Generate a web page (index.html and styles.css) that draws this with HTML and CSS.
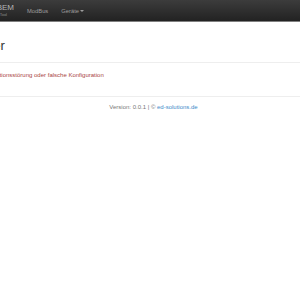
FILE: index.html
```html
<!DOCTYPE html>
<html lang="de">
<head>
<meta charset="utf-8">
<title>Fehler</title>
<link rel="stylesheet" href="styles.css">
</head>
<body>
<nav class="navbar">
  <div class="brand">
    <span class="brand-name">KOMBEM</span>
    <span class="brand-sub">Tool</span>
  </div>
  <ul class="nav">
    <li class="nav-item">ModBus</li>
    <li class="nav-item">Geräte <span class="caret"></span></li>
  </ul>
</nav>
<main class="container">
  <div class="page-header">
    <h2 class="title">Fehler</h2>
  </div>
  <p class="text-danger">Kommunikationsstörung oder falsche Konfiguration</p>
  <footer class="footer">Version: 0.0.1 | © <a class="footer-link" href="#">ed-solutions.de</a></footer>
</main>
</body>
</html>
```
FILE: styles.css
```css
html, body {
  margin: 0;
  padding: 0;
  background: #fff;
  overflow: hidden;
}
body {
  font-family: "Liberation Sans", Arial, sans-serif;
  font-size: 6px;
  color: #333;
}
.navbar {
  height: 21px;
  background: linear-gradient(#3c3c3c, #222222);
  border-bottom: 1px solid #808080;
  display: flex;
  align-items: center;
}
.brand {
  width: 14px;
  flex: none;
  display: flex;
  flex-direction: column;
  align-items: flex-end;
  white-space: nowrap;
  color: #b5b5b5;
}
.brand-name {
  font-size: 8px;
  line-height: 8px;
}
.brand-sub {
  font-size: 4px;
  line-height: 5px;
  margin-right: 7px;
  color: #8a8a8a;
}
.nav {
  list-style: none;
  margin: 0 0 0 13px;
  padding: 0;
  display: flex;
  gap: 13px;
}
.nav-item {
  color: #9d9d9d;
  font-size: 5.8px;
  line-height: 8px;
  white-space: nowrap;
  display: flex;
  align-items: center;
  gap: 1px;
}
.caret {
  width: 0;
  height: 0;
  border-top: 2px solid #9d9d9d;
  border-left: 2px solid transparent;
  border-right: 2px solid transparent;
}
.container {
  margin: 0 -39px 0 -32px;
}
.page-header {
  margin-top: 17px;
  padding-bottom: 10px;
  border-bottom: 1px solid #eeeeee;
}
.title {
  margin: 0;
  font-size: 13px;
  line-height: 13px;
  font-weight: 500;
  color: #333;
}
.text-danger {
  margin: 8px 0 17px;
  line-height: 8px;
  color: #a94442;
}
.footer {
  border-top: 1px solid #eeeeee;
  padding-top: 6px;
  line-height: 8px;
  text-align: center;
  color: #777;
}
.footer-link {
  color: #428bca;
  text-decoration: none;
}
```
